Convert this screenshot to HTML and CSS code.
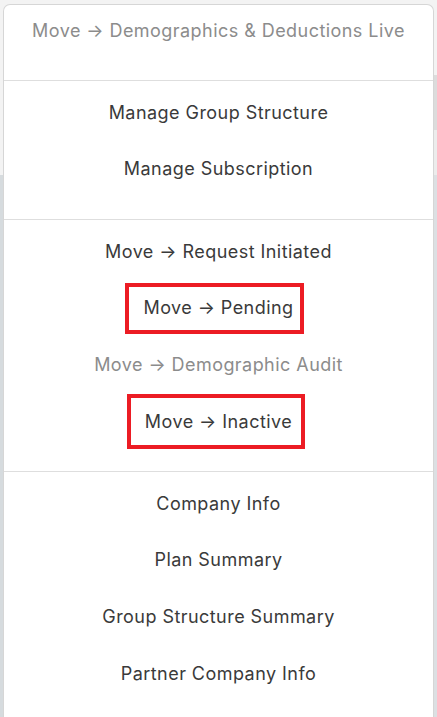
FILE: index.html
```html
<!DOCTYPE html>
<html lang="en">
<head>
<meta charset="utf-8">
<title>Menu</title>
<link rel="stylesheet" href="styles.css">
</head>
<body>
<div class="menu">
  <div class="section first">
    <div class="item disabled">Move → Demographics &amp; Deductions Live</div>
  </div>
  <div class="section">
    <div class="item">Manage Group Structure</div>
    <div class="item">Manage Subscription</div>
  </div>
  <div class="section">
    <div class="item">Move → Request Initiated</div>
    <div class="item">Move → Pending<span class="mark mark-pending"></span></div>
    <div class="item disabled">Move → Demographic Audit</div>
    <div class="item">Move → Inactive<span class="mark mark-inactive"></span></div>
  </div>
  <div class="section">
    <div class="item">Company Info</div>
    <div class="item">Plan Summary</div>
    <div class="item">Group Structure Summary</div>
    <div class="item">Partner Company Info</div>
  </div>
</div>
</body>
</html>
```
FILE: styles.css
```css
html, body {
  margin: 0;
  padding: 0;
  height: 100%;
  overflow: hidden;
}
body {
  background-color: #f3f3f3;
  background-image:
    linear-gradient(to bottom, #f3f3f3 0 75px, #dcdcdc 75px 130px, #ececec 130px 175px, #dce0e3 175px),
    linear-gradient(to bottom, #f3f3f3 0 175px, #d6dbde 175px);
  background-size: 4px 100%, 3px 100%;
  background-position: right top, left top;
  background-repeat: no-repeat;
  font-family: Inter, "Noto Sans", sans-serif;
}
.menu {
  margin: 4px 0 0 3px;
  width: 431px;
  height: 760px;
  box-sizing: border-box;
  background: #ffffff;
  border: 1px solid #d6d6d6;
  border-bottom: none;
  border-radius: 7px 7px 0 0;
  overflow: hidden;
}
.section {
  padding: 2.5px 0 22px;
  border-top: 1px solid #dedede;
}
.section.first {
  border-top: none;
  padding-top: 0;
  margin-top: -3.5px;
}
.item {
  position: relative;
  padding: 16px 16px 14px;
  line-height: 26.67px;
  font-size: 18px;
  letter-spacing: 0.45px;
  text-align: center;
  color: #3a3a3a;
  white-space: nowrap;
}
.item.disabled {
  color: #8c8c8c;
}
.mark {
  position: absolute;
  border: 4px solid #ec1c24;
  box-sizing: border-box;
}
.mark-pending {
  left: 121px;
  top: 4px;
  width: 179px;
  height: 51px;
}
.mark-inactive {
  left: 123px;
  top: 1px;
  width: 178px;
  height: 55px;
}
```
